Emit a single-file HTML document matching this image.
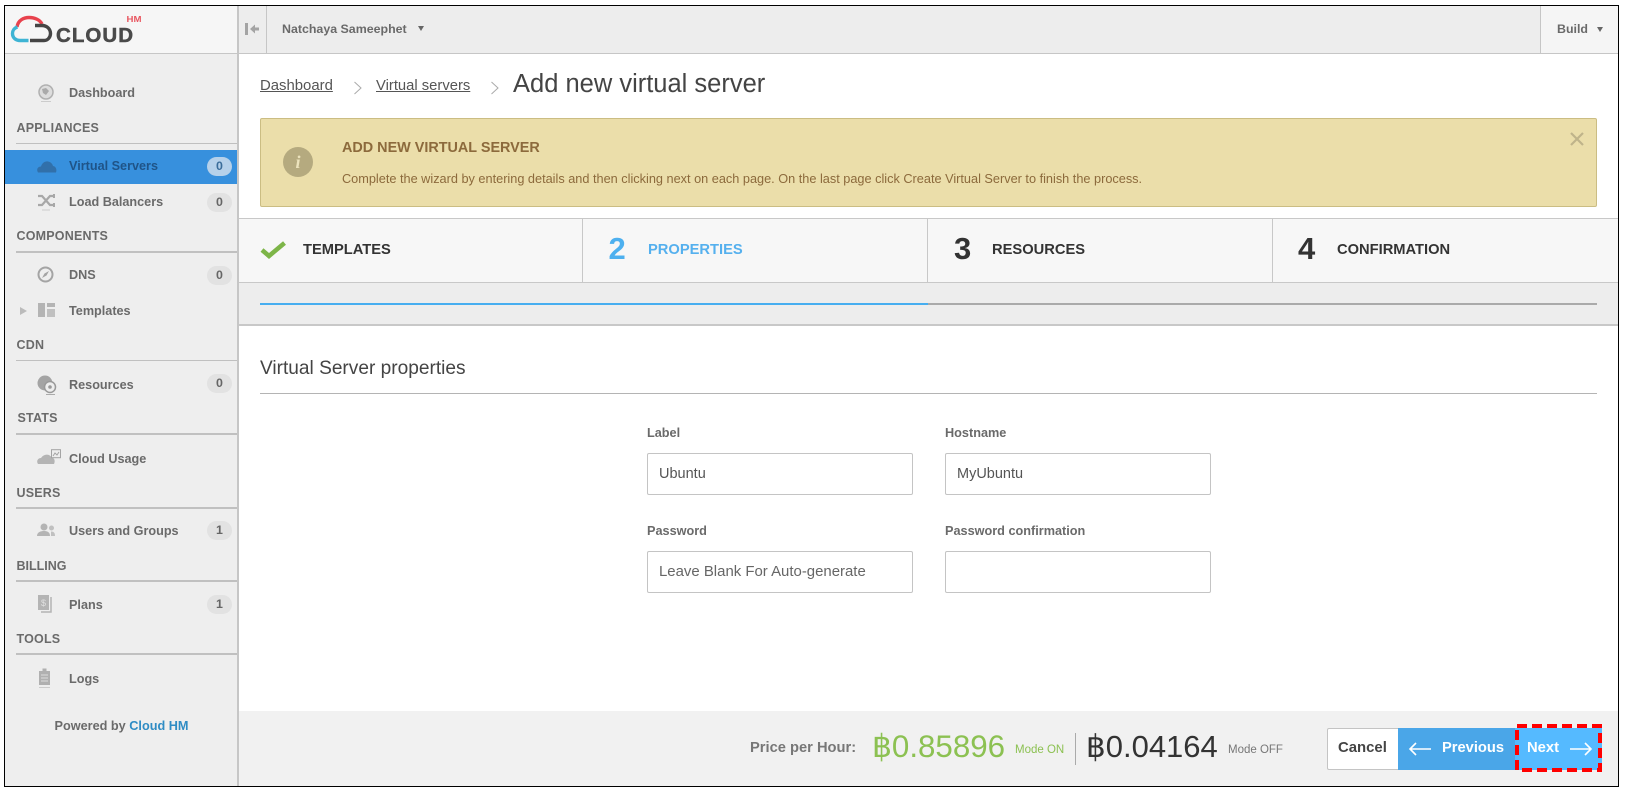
<!DOCTYPE html>
<html><head><meta charset="utf-8"><title>Add new virtual server</title>
<style>
html,body{margin:0;padding:0;background:#fff}
body{width:1625px;height:791px;overflow:hidden;position:relative;font-family:"Liberation Sans",Arial,sans-serif;color:#555}
.a{position:absolute}
.t{position:absolute;white-space:nowrap;line-height:20px}
.nav{font-size:12.65px;font-weight:bold;color:#6a6a6a;left:69px}
.sec{font-size:12.5px;font-weight:bold;color:#6a6a6a;left:16.5px;letter-spacing:.2px}
.ln{position:absolute;left:16px;width:221px;height:1.5px;background:#c0c0c0}
.bd{position:absolute;left:207px;width:25px;height:19px;border-radius:10px;background:#e2e2e2;color:#666;font-size:12.4px;font-weight:bold;line-height:19px;text-align:center}
.st{font-size:14.7px;font-weight:bold;color:#333}
.num{font-size:31px;font-weight:bold;color:#333;line-height:36px;position:absolute;white-space:nowrap}
.lb{font-size:12.7px;font-weight:bold;color:#6a6a6a}
.in{position:absolute;width:264px;height:40px;border:1.5px solid #c4c4c4;border-radius:2px;background:#fff;font-size:14.5px;line-height:40px;color:#555;box-sizing:content-box;text-indent:11px}
svg{position:absolute;overflow:visible}
</style></head><body>
<!-- frame -->
<div class="a" style="left:5px;top:6px;width:1613px;height:780px;background:#fff"></div>

<!-- header -->
<div class="a" style="left:5px;top:6px;width:232px;height:47px;background:#f6f6f6"></div>
<div class="a" style="left:239px;top:6px;width:1379px;height:47px;background:#ededed"></div>
<div class="a" style="left:1540px;top:6px;width:78px;height:47px;background:#f5f5f5"></div>
<div class="a" style="left:5px;top:52.5px;width:1613px;height:1.5px;background:#c6c6c6"></div>
<div class="a" style="left:237px;top:6px;width:1.5px;height:780px;background:#c6c6c6"></div>
<div class="a" style="left:266px;top:6px;width:1.2px;height:47px;background:#c6c6c6"></div>
<div class="a" style="left:1540px;top:6px;width:1.2px;height:47px;background:#c6c6c6"></div>

<!-- logo -->
<svg style="left:0;top:0" width="150" height="52" viewBox="0 0 150 52" fill="none">
<path d="M17 27C18 20 24 17.500 29 17.500C35 17.500 40 20 42 24" stroke="#e8424d" stroke-width="3.400"/>
<path d="M17.500 27C14 28 12.500 31 12.500 33.500C12.500 38 16 40.500 20 40.500L28.500 40.500" stroke="#3eb4d4" stroke-width="3.400"/>
<path d="M30 40.500L44 40.500C48 40.500 50.500 37 50.500 33.500C50.500 29 47 25.500 42 25.500L35 25.500" stroke="#454545" stroke-width="3.400"/>
<text x="56" y="42" font-family="Liberation Sans" font-weight="bold" font-size="20.500" fill="#4a4a4a" stroke="#4a4a4a" stroke-width=".5" textLength="77" lengthAdjust="spacing">CLOUD</text>
<text x="126.500" y="22" font-family="Liberation Sans" font-weight="bold" font-size="8.500" fill="#e85660" textLength="15" lengthAdjust="spacingAndGlyphs">HM</text>
</svg>

<!-- collapse -->
<svg style="left:244px;top:22px" width="16" height="14" viewBox="0 0 16 14">
<rect x="1" y="1" width="3" height="12" fill="#a4a4a4"/>
<path d="M6 7L11 2.500L11 5.500L15 5.500L15 8.500L11 8.500L11 11.500Z" fill="#a4a4a4"/>
</svg>
<div class="t" style="left:282px;top:19px;font-size:12.4px;font-weight:bold;color:#6a6a6a">Natchaya Sameephet</div>
<svg style="left:418px;top:26px" width="7" height="5"><path d="M0 0L6 0L3 5Z" fill="#666"/></svg>
<div class="t" style="left:1557px;top:19px;font-size:12.4px;font-weight:bold;color:#6a6a6a">Build</div>
<svg style="left:1597px;top:27px" width="7" height="5"><path d="M0 0L6 0L3 5Z" fill="#666"/></svg>

<!-- sidebar -->
<div class="a" style="left:5px;top:54px;width:232px;height:732px;background:#eee"></div>
<svg style="left:37px;top:83px" width="20" height="20" viewBox="0 0 20 20" fill="none">
<circle cx="9" cy="9" r="7" stroke="#b0b0b0" stroke-width="1.500" fill="#ddd"/><path d="M5 6L9 5L12 8L9 12L6 10Z" fill="#aaa"/><path d="M4 18.500H14" stroke="#ccc"/>
</svg>
<div class="t nav" style="top:83px">Dashboard</div>
<div class="t sec" style="top:118px">APPLIANCES</div>
<div class="ln" style="top:142.500px"></div>

<div class="a" style="left:5px;top:150px;width:232px;height:34px;background:#3790dd"></div>
<svg style="left:37px;top:160px" width="20" height="13" viewBox="0 0 20 13"><path d="M1 12.500C-1 9 1 6.500 4 6.500C5 3 8 1 11 1.500C14 2 15.500 4 16 6C19 6.500 20 9.500 19 12.500Z" fill="#3170aa"/></svg>
<div class="t nav" style="top:156px;color:#1f5488">Virtual Servers</div>
<div class="bd" style="top:157px;background:#b6d1ea;color:#3b6d9a">0</div>

<svg style="left:37px;top:193px" width="20" height="18" viewBox="0 0 20 18" fill="none" stroke="#a8a8a8" stroke-width="2.200">
<path d="M1 3L5 3L13 12L17 12M1 12L5 12L13 3L17 3"/><path d="M17 1V5M17 10V14" stroke-width="2"/><path d="M5 17H13" stroke="#ccc" stroke-width="1"/>
</svg>
<div class="t nav" style="top:192px">Load Balancers</div>
<div class="bd" style="top:192.500px">0</div>

<div class="t sec" style="top:226px">COMPONENTS</div>
<div class="ln" style="top:251px"></div>
<svg style="left:37px;top:266px" width="18" height="18" viewBox="0 0 18 18" fill="none"><circle cx="8.500" cy="8.500" r="7" stroke="#a4a4a4" stroke-width="2"/><path d="M12 5L9.500 9.500L5 12L7.500 7.500Z" fill="#a4a4a4"/></svg>
<div class="t nav" style="top:265px">DNS</div>
<div class="bd" style="top:265.500px">0</div>

<svg style="left:19px;top:306px" width="9" height="10"><path d="M1 1L8 5L1 9Z" fill="#bbb"/></svg>
<svg style="left:38px;top:303px" width="17" height="14"><rect x="0" y="0" width="7" height="14" fill="#b4b4b4"/><rect x="9" y="0" width="8" height="4" fill="#b4b4b4"/><rect x="9" y="6" width="8" height="8" fill="#c0c0c0"/></svg>
<div class="t nav" style="top:301px">Templates</div>

<div class="t sec" style="top:335px">CDN</div>
<div class="ln" style="top:359.500px"></div>
<svg style="left:37px;top:375px" width="20" height="20" viewBox="0 0 20 20" fill="none"><circle cx="8" cy="8" r="7.500" fill="#a4a4a4"/><circle cx="13" cy="12" r="5.500" fill="#eee" stroke="#999" stroke-width="1.500"/><circle cx="13" cy="12" r="1.800" fill="#999"/><path d="M9 19.500H18" stroke="#aaa"/></svg>
<div class="t nav" style="top:375px">Resources</div>
<div class="bd" style="top:374px">0</div>

<div class="t sec" style="top:408px;left:17.5px">STATS</div>
<div class="ln" style="top:433px"></div>
<svg style="left:37px;top:449px" width="25" height="16" viewBox="0 0 25 16"><path d="M1 15C-1 12 1 9 4 9C6 6 9 5 12 6L16 9C18 10 18 13 17 15Z" fill="#b4b4b4"/><rect x="14.500" y="0.700" width="9" height="8" fill="#eee" stroke="#a4a4a4"/><path d="M16 7L18 4L20 6L22 3" stroke="#a4a4a4" fill="none"/></svg>
<div class="t nav" style="top:449px">Cloud Usage</div>

<div class="t sec" style="top:483px">USERS</div>
<div class="ln" style="top:507px"></div>
<svg style="left:37px;top:522px" width="20" height="16" viewBox="0 0 20 16"><circle cx="7" cy="5" r="3.500" fill="#b4b4b4"/><path d="M0 14C0 10 4 9 7 9C10 9 13 10 13 14Z" fill="#b4b4b4"/><circle cx="14.500" cy="6" r="2.500" fill="#c0c0c0"/><path d="M14 14C14 11 14 10 14 9.500C17 9.500 18 11 18 14Z" fill="#c0c0c0"/></svg>
<div class="t nav" style="top:521px">Users and Groups</div>
<div class="bd" style="top:520.500px">1</div>

<div class="t sec" style="top:556px;letter-spacing:0">BILLING</div>
<div class="ln" style="top:580px"></div>
<svg style="left:37px;top:594px" width="16" height="20" viewBox="0 0 16 20"><rect x="1" y="1" width="11" height="15" fill="#b4b4b4"/><path d="M14 3V18H4" stroke="#b4b4b4" stroke-width="1.500" fill="none"/><text x="4" y="12" font-size="9" fill="#e0e0e0" font-family="Liberation Sans">$</text></svg>
<div class="t nav" style="top:595px">Plans</div>
<div class="bd" style="top:595px">1</div>

<div class="t sec" style="top:629px">TOOLS</div>
<div class="ln" style="top:653px"></div>
<svg style="left:38px;top:668px" width="14" height="21" viewBox="0 0 14 21"><rect x="1" y="3" width="11" height="14" fill="#b0b0b0"/><rect x="4.500" y="0.500" width="4" height="4" fill="#b0b0b0"/><path d="M3 7H10M3 10H10M3 13H10" stroke="#ddd"/><path d="M1 19.500H12" stroke="#ccc"/></svg>
<div class="t nav" style="top:669px">Logs</div>
<div class="t" style="left:54.500px;top:716px;font-size:12.7px;font-weight:bold;color:#6a6a6a">Powered by <span style="color:#2f8cc4">Cloud HM</span></div>

<!-- breadcrumb -->
<div class="t" style="left:260px;top:76px;font-size:14.9px;color:#555;text-decoration:underline">Dashboard</div>
<svg style="left:353px;top:81px" width="10" height="14" fill="none"><path d="M1.500 1L8 7L1.500 13" stroke="#aaa"/></svg>
<div class="t" style="left:376px;top:76px;font-size:14.8px;color:#555;text-decoration:underline">Virtual servers</div>
<svg style="left:490px;top:81px" width="10" height="14" fill="none"><path d="M1.500 1L8 7L1.500 13" stroke="#aaa"/></svg>
<div class="t" style="left:513px;top:69px;font-size:25.500px;line-height:30px;color:#444">Add new virtual server</div>

<!-- alert -->
<div class="a" style="left:260px;top:118px;width:1335px;height:87px;background:#ebdeaa;border:1.500px solid #cbbd83;border-radius:2px"></div>
<div class="a" style="left:283px;top:147px;width:30px;height:30px;border-radius:50%;background:#b5aa7f"></div>
<div class="t" style="left:283px;top:152px;width:30px;text-align:center;font-family:'Liberation Serif',serif;font-style:italic;font-weight:bold;font-size:18px;color:#ece3bd">i</div>
<div class="t" style="left:342px;top:138px;font-size:14.4px;font-weight:bold;color:#8c6a3c">ADD NEW VIRTUAL SERVER</div>
<div class="t" style="left:342px;top:169px;font-size:12.73px;color:#8c6a3c">Complete the wizard by entering details and then clicking next on each page. On the last page click Create Virtual Server to finish the process.</div>
<svg style="left:1570px;top:132px" width="14" height="14" fill="none"><path d="M1 1L13 13M13 1L1 13" stroke="#bfb48a" stroke-width="2.200"/></svg>

<!-- steps -->
<div class="a" style="left:238.500px;top:218px;width:1379.500px;height:65px;background:#f7f7f7;border-top:1.500px solid #c8c8c8;border-bottom:1.500px solid #c8c8c8;box-sizing:border-box"></div>
<div class="a" style="left:582px;top:219px;width:1.200px;height:64px;background:#c8c8c8"></div>
<div class="a" style="left:927px;top:219px;width:1.200px;height:64px;background:#c8c8c8"></div>
<div class="a" style="left:1272px;top:219px;width:1.200px;height:64px;background:#c8c8c8"></div>
<svg style="left:260px;top:240px" width="27" height="20" fill="none"><path d="M2 10L9 16L24.500 3" stroke="#7db548" stroke-width="4.500"/></svg>
<div class="t st" style="left:303px;top:240px">TEMPLATES</div>
<div class="num" style="left:608.500px;top:231px;color:#4db0ef">2</div>
<div class="t st" style="left:648px;top:240px;color:#55b0ee">PROPERTIES</div>
<div class="num" style="left:954px;top:231px">3</div>
<div class="t st" style="left:992px;top:240px">RESOURCES</div>
<div class="num" style="left:1298px;top:231px">4</div>
<div class="t st" style="left:1337px;top:240px">CONFIRMATION</div>

<!-- progress -->
<div class="a" style="left:238.500px;top:283px;width:1379.500px;height:41px;background:#ededed;border-bottom:2px solid #c8c8c8"></div>
<div class="a" style="left:260px;top:303px;width:1337px;height:2px;background:#aaa"></div>
<div class="a" style="left:260px;top:303px;width:668px;height:2px;background:#47aef0"></div>

<!-- form -->
<div class="t" style="left:260px;top:359px;font-size:19.1px;color:#444">Virtual Server properties</div>
<div class="a" style="left:260px;top:393px;width:1337px;height:1.200px;background:#b4b4b4"></div>

<div class="t lb" style="left:647px;top:423px">Label</div>
<div class="t lb" style="left:945px;top:423px">Hostname</div>
<div class="in" style="left:647px;top:453px">Ubuntu</div>
<div class="in" style="left:945px;top:453px">MyUbuntu</div>
<div class="t lb" style="left:647px;top:521px">Password</div>
<div class="t lb" style="left:945px;top:521px">Password confirmation</div>
<div class="in" style="left:647px;top:551px;color:#666;font-size:14.95px">Leave Blank For Auto-generate</div>
<div class="in" style="left:945px;top:551px"></div>

<!-- footer -->
<div class="a" style="left:238.500px;top:711px;width:1379.500px;height:75px;background:#f1f1f1"></div>
<div class="t" style="left:750px;top:738px;font-size:14.700px;font-weight:bold;color:#777">Price per Hour:</div>
<div class="t" style="left:872px;top:729px;font-size:31.300px;line-height:36px;color:#8cc152">฿0.85896</div>
<div class="t" style="left:1015px;top:740px;font-size:11.500px;color:#8cc152">Mode ON</div>
<div class="a" style="left:1075px;top:733px;width:1px;height:32px;background:#aaa"></div>
<div class="t" style="left:1086px;top:729px;font-size:31px;line-height:36px;color:#333">฿0.04164</div>
<div class="t" style="left:1228px;top:740px;font-size:11.500px;color:#777">Mode OFF</div>

<div class="a" style="left:1326.500px;top:728px;width:72px;height:40px;background:#fff;border:1.500px solid #c4c4c4;border-right:0;border-radius:2px 0 0 2px"></div>
<div class="t" style="left:1338px;top:738px;font-size:14.900px;font-weight:bold;color:#444">Cancel</div>
<div class="a" style="left:1398px;top:728px;width:117px;height:42px;background:#4aa6e8"></div>
<div class="a" style="left:1515px;top:728px;width:87px;height:42px;background:#55baff"></div>
<svg style="left:1408px;top:741px" width="24" height="16" fill="none"><path d="M23 8H2M8 2L2 8L8 14" stroke="#fff" stroke-width="1.600"/></svg>
<div class="t" style="left:1442px;top:738px;font-size:14.700px;font-weight:bold;color:#fff">Previous</div>
<div class="t" style="left:1527px;top:738px;font-size:14.800px;font-weight:bold;color:#fff">Next</div>
<svg style="left:1569px;top:741px" width="24" height="16" fill="none"><path d="M1 8H22M16 2L22 8L16 14" stroke="#fff" stroke-width="1.600"/></svg>
<svg style="left:1515px;top:724px" width="87" height="46" fill="none"><rect x="2" y="2" width="83" height="44" stroke="#f00" stroke-width="4" stroke-dasharray="10 5"/></svg>

<!-- outer black frame -->
<div class="a" style="left:4px;top:5px;width:1612.500px;height:780px;border:1.500px solid #000"></div>
</body></html>
